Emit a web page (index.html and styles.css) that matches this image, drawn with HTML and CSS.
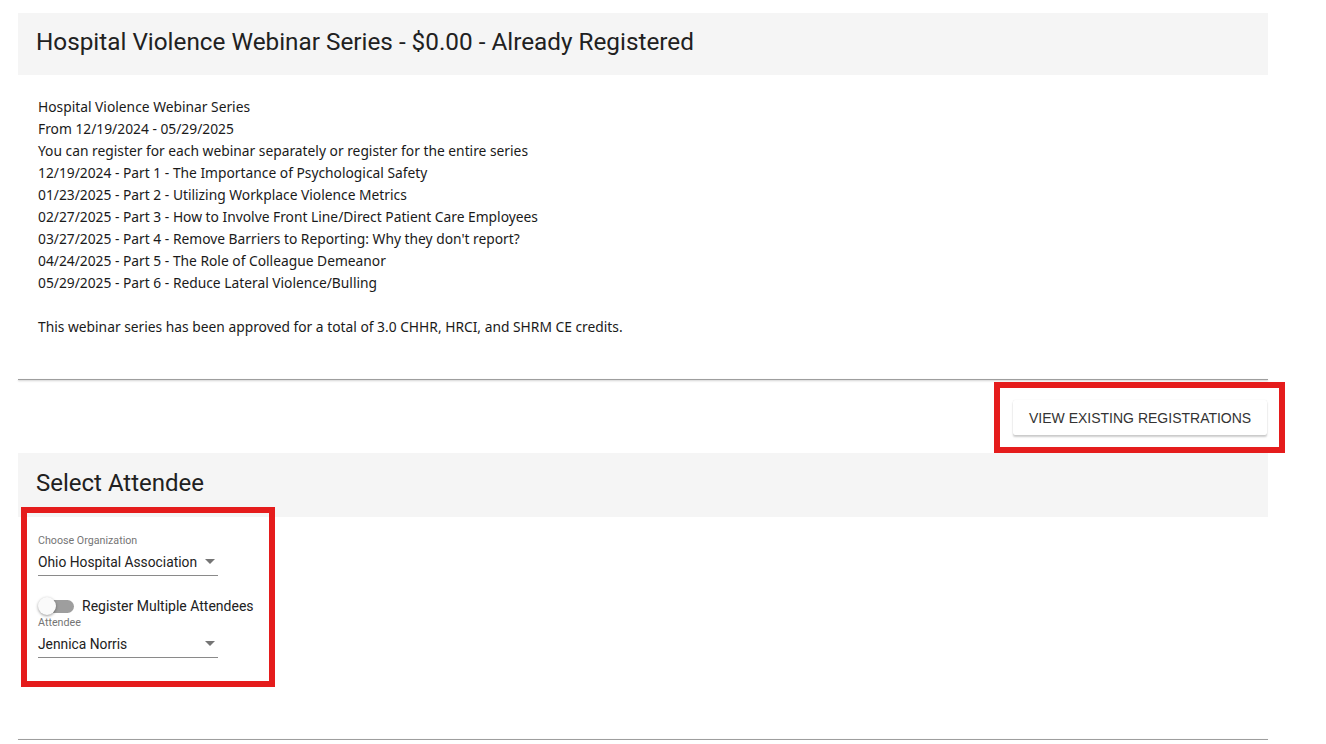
FILE: index.html
```html
<!DOCTYPE html>
<html>
<head>
<meta charset="utf-8">
<link rel="stylesheet" href="styles.css">
</head>
<body>
<div class="page">
  <div class="bar"><h1 class="bar-title">Hospital Violence Webinar Series - $0.00 - Already Registered</h1></div>
  <div class="desc">
    <div>Hospital Violence Webinar Series</div>
    <div>From 12/19/2024 - 05/29/2025</div>
    <div>You can register for each webinar separately or register for the entire series</div>
    <div>12/19/2024 - Part 1 - The Importance of Psychological Safety</div>
    <div>01/23/2025 - Part 2 - Utilizing Workplace Violence Metrics</div>
    <div>02/27/2025 - Part 3 - How to Involve Front Line/Direct Patient Care Employees</div>
    <div>03/27/2025 - Part 4 - Remove Barriers to Reporting: Why they don't report?</div>
    <div>04/24/2025 - Part 5 - The Role of Colleague Demeanor</div>
    <div>05/29/2025 - Part 6 - Reduce Lateral Violence/Bulling</div>
    <div class="blank">&nbsp;</div>
    <div>This webinar series has been approved for a total of 3.0 CHHR, HRCI, and SHRM CE credits.</div>
  </div>
  <hr class="divider">
  <div class="actions">
    <div class="btn-wrap">
      <button class="btn">View Existing Registrations</button>
      <span class="highlight hl-btn"></span>
    </div>
  </div>
  <div class="bar bar-2"><h2 class="bar-title">Select Attendee</h2></div>
  <div class="form">
    <span class="highlight hl-form"></span>
    <div class="field">
      <div class="field-label">Choose Organization</div>
      <div class="select"><span class="select-value">Ohio Hospital Association</span><span class="arrow"></span></div>
    </div>
    <div class="toggle-row">
      <span class="switch"><span class="track"></span><span class="thumb"></span></span>
      <span class="toggle-label">Register Multiple Attendees</span>
    </div>
    <div class="field">
      <div class="field-label">Attendee</div>
      <div class="select"><span class="select-value">Jennica Norris</span><span class="arrow"></span></div>
    </div>
  </div>
  <hr class="divider divider-bottom">
</div>
</body>
</html>
```
FILE: styles.css
```css
* { box-sizing: border-box; }
html, body { margin: 0; padding: 0; background: #fff; }
body { font-family: Roboto, "Liberation Sans", Arial, sans-serif; color: #212121; }
.page { width: 1250px; margin-left: 18px; padding-top: 13px; }
.bar { background: #f5f5f5; height: 62px; display: flex; align-items: center; padding-left: 18px; padding-bottom: 6px; }
.bar-2 { height: 64px; padding-bottom: 4px; }
.bar-title { margin: 0; font-weight: 400; font-size: 24px; color: #212121; }
.bar:first-child .bar-title { font-size: 24.3px; }
.desc { padding: 21px 20px 0; font-family: "Noto Sans", "Open Sans", sans-serif; font-size: 13.8px; line-height: 22px; color: #1a1a1a; }
.divider { margin: 41px 0 0; border: 0; height: 1px; background: #9e9e9e; box-shadow: 0 1px 2px rgba(0,0,0,0.25); }
.actions { display: flex; justify-content: flex-end; padding: 20px 1px 18px 0; }
.btn-wrap { position: relative; }
.btn { display: block; height: 35px; width: 254px; border: 0; background: #fff; border-radius: 2px; box-shadow: 0 2px 2px rgba(0,0,0,0.2), 0 0 1px rgba(0,0,0,0.12); font-family: "Liberation Sans", Arial, sans-serif; font-size: 14px; text-transform: uppercase; white-space: nowrap; color: #333; padding: 0 0 0 16px; text-align: left; }
.highlight { position: absolute; border: 6px solid #e51c1c; pointer-events: none; }
.hl-btn { left: -19px; top: -18px; right: -18px; bottom: -18px; }
.form { position: relative; padding: 17px 20px 0; }
.hl-form { left: 3px; top: -10px; width: 254px; height: 180px; }
.field { width: 180px; }
.field-label { font-size: 10.7px; line-height: 14px; color: #757575; }
.select { height: 28px; border-bottom: 1px solid #8a8a8a; display: flex; align-items: center; justify-content: space-between; padding-right: 3px; }
.select-value { font-size: 13.8px; color: #212121; }
.arrow { width: 0; height: 0; border-left: 5px solid transparent; border-right: 5px solid transparent; border-top: 5px solid #757575; }
.toggle-row { display: flex; align-items: center; height: 20px; margin-top: 20px; }
.switch { position: relative; width: 36px; height: 20px; display: inline-block; margin-right: 8px; }
.track { position: absolute; left: 2px; top: 4px; width: 34px; height: 13px; border-radius: 7px; background: #9e9e9e; }
.thumb { position: absolute; left: 0; top: 1px; width: 18px; height: 18px; border-radius: 50%; background: #fafafa; box-shadow: 0 1px 3px rgba(0,0,0,0.4); }
.toggle-label { font-size: 14px; color: #212121; }
.divider-bottom { margin-top: 81px; }
```
